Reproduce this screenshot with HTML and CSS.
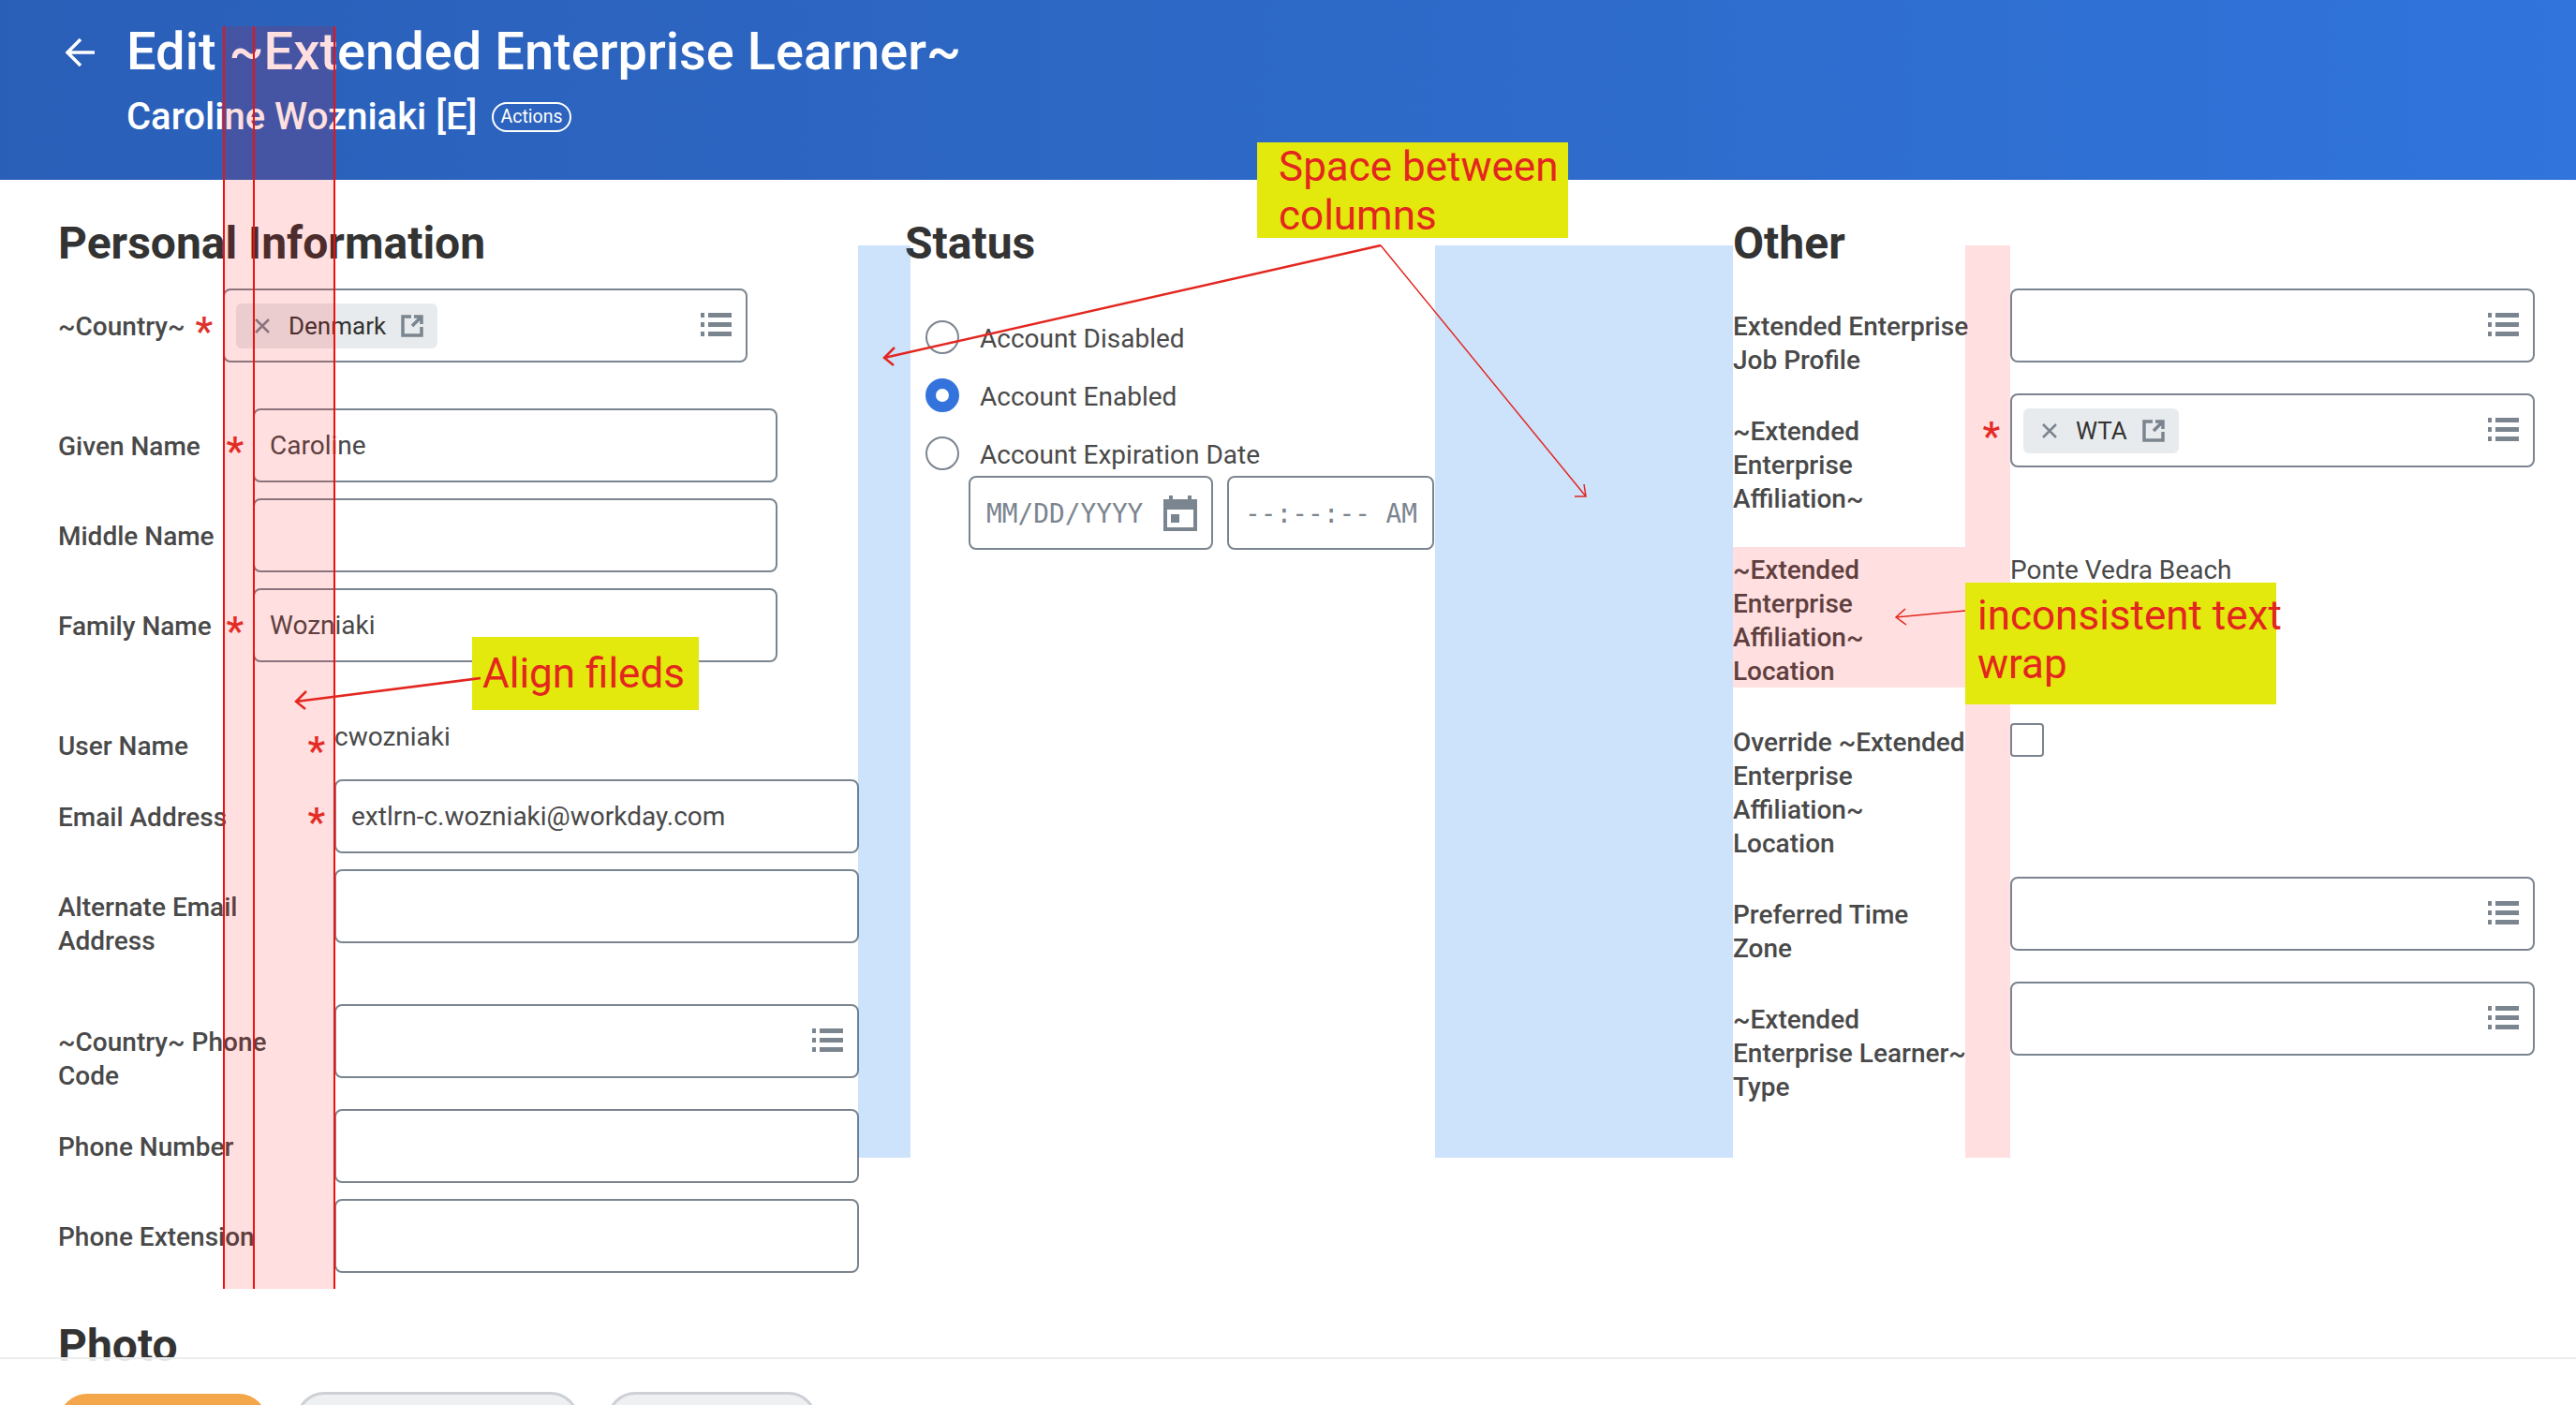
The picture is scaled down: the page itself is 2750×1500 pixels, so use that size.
FILE: index.html
```html
<!DOCTYPE html>
<html lang="en">
<head>
<meta charset="utf-8">
<title>Edit ~Extended Enterprise Learner~</title>
<link rel="stylesheet" href="styles.css">
</head>
<body>
<header class="banner">
  <svg class="back" viewBox="0 0 32 32" width="32" height="32"><path d="M31 16H2M16 2 2 16l14 14"/></svg>
  <div class="banner-text">
    <h1 class="title">Edit ~Extended Enterprise Learner~</h1>
    <div class="subtitle"><span>Caroline Wozniaki [E]</span><span class="pill">Actions</span></div>
  </div>
</header>

<main class="form">
  <section class="col">
    <h2 class="heading">Personal Information</h2>
    <div class="row">
      <div class="label w-country"><span>~Country~</span><span class="req">*</span></div>
      <div class="field prompt">
        <span class="chip">
          <svg class="chip-x" viewBox="0 0 16 16" width="16" height="16"><path d="M1 1l14 14M15 1 1 15"/></svg>
          <span class="chip-text">Denmark</span>
          <svg class="chip-open" viewBox="0 0 24 24" width="24" height="24"><path d="M11 2H2v20h20v-9"/><path d="M12 12 21 3M14 2h8v8"/></svg>
        </span>
        <svg class="list" viewBox="0 0 33 25" width="33" height="25"><path d="M0 0h4v5H0zM8 0h25v5H8zM0 10h4v5H0zM8 10h25v5H8zM0 20h4v5H0zM8 20h25v5H8z"/></svg>
      </div>
    </div>
    <div class="row spaced">
      <div class="label w-name"><span>Given Name</span><span class="req">*</span></div>
      <div class="field">Caroline</div>
    </div>
    <div class="row">
      <div class="label w-name"><span>Middle Name</span></div>
      <div class="field"></div>
    </div>
    <div class="row">
      <div class="label w-name"><span>Family Name</span><span class="req">*</span></div>
      <div class="field">Wozniaki</div>
    </div>
    <div class="row spaced">
      <div class="label w-wide"><span>User Name</span><span class="req">*</span></div>
      <div class="value value-high">cwozniaki</div>
    </div>
    <div class="row">
      <div class="label w-wide"><span>Email Address</span><span class="req">*</span></div>
      <div class="field">extlrn-c.wozniaki@workday.com</div>
    </div>
    <div class="row">
      <div class="label w-wide"><span>Alternate Email<br>Address</span></div>
      <div class="field"></div>
    </div>
    <div class="row spaced">
      <div class="label w-wide"><span>~Country~ Phone<br>Code</span></div>
      <div class="field prompt end">
        <svg class="list" viewBox="0 0 33 25" width="33" height="25"><path d="M0 0h4v5H0zM8 0h25v5H8zM0 10h4v5H0zM8 10h25v5H8zM0 20h4v5H0zM8 20h25v5H8z"/></svg>
      </div>
    </div>
    <div class="row">
      <div class="label w-wide"><span>Phone Number</span></div>
      <div class="field"></div>
    </div>
    <div class="row">
      <div class="label w-wide"><span>Phone Extension</span></div>
      <div class="field"></div>
    </div>
    <h2 class="heading photo">Photo</h2>
  </section>

  <section class="col col-status">
    <h2 class="heading">Status</h2>
    <div class="radios">
      <div class="radio-row"><span class="radio"></span><span class="radio-text">Account Disabled</span></div>
      <div class="radio-row"><span class="radio on"></span><span class="radio-text">Account Enabled</span></div>
      <div class="radio-row"><span class="radio"></span><span class="radio-text">Account Expiration Date</span></div>
    </div>
    <div class="date-row">
      <div class="field mono date">
        <span>MM/DD/YYYY</span>
        <svg class="cal" viewBox="0 0 36 38" width="36" height="38"><path fill-rule="evenodd" d="M6 0h4v4h16V0h4v4h6v34H0V4h6zM4 15v19h28V15zM8 20h9v9H8z"/></svg>
      </div>
      <div class="field mono time">--:--:-- AM</div>
    </div>
  </section>

  <section class="col col-other">
    <h2 class="heading">Other</h2>
    <div class="row">
      <div class="label w-other"><span>Extended Enterprise<br>Job Profile</span></div>
      <div class="field prompt end">
        <svg class="list" viewBox="0 0 33 25" width="33" height="25"><path d="M0 0h4v5H0zM8 0h25v5H8zM0 10h4v5H0zM8 10h25v5H8zM0 20h4v5H0zM8 20h25v5H8z"/></svg>
      </div>
    </div>
    <div class="row">
      <div class="label w-other"><span>~Extended<br>Enterprise<br>Affiliation~</span><span class="req">*</span></div>
      <div class="field prompt">
        <span class="chip">
          <svg class="chip-x" viewBox="0 0 16 16" width="16" height="16"><path d="M1 1l14 14M15 1 1 15"/></svg>
          <span class="chip-text">WTA</span>
          <svg class="chip-open" viewBox="0 0 24 24" width="24" height="24"><path d="M11 2H2v20h20v-9"/><path d="M12 12 21 3M14 2h8v8"/></svg>
        </span>
        <svg class="list" viewBox="0 0 33 25" width="33" height="25"><path d="M0 0h4v5H0zM8 0h25v5H8zM0 10h4v5H0zM8 10h25v5H8zM0 20h4v5H0zM8 20h25v5H8z"/></svg>
      </div>
    </div>
    <div class="row">
      <div class="label w-other"><span>~Extended<br>Enterprise<br>Affiliation~<br>Location</span></div>
      <div class="value">Ponte Vedra Beach</div>
    </div>
    <div class="row">
      <div class="label w-other"><span>Override ~Extended<br>Enterprise<br>Affiliation~<br>Location</span></div>
      <span class="check"></span>
    </div>
    <div class="row">
      <div class="label w-other"><span>Preferred Time<br>Zone</span></div>
      <div class="field prompt end">
        <svg class="list" viewBox="0 0 33 25" width="33" height="25"><path d="M0 0h4v5H0zM8 0h25v5H8zM0 10h4v5H0zM8 10h25v5H8zM0 20h4v5H0zM8 20h25v5H8z"/></svg>
      </div>
    </div>
    <div class="row">
      <div class="label w-other"><span>~Extended<br>Enterprise Learner~<br>Type</span></div>
      <div class="field prompt end">
        <svg class="list" viewBox="0 0 33 25" width="33" height="25"><path d="M0 0h4v5H0zM8 0h25v5H8zM0 10h4v5H0zM8 10h25v5H8zM0 20h4v5H0zM8 20h25v5H8z"/></svg>
      </div>
    </div>
  </section>
</main>

<footer class="actions">
  <span class="btn btn-primary"></span>
  <span class="btn btn-second"></span>
  <span class="btn btn-third"></span>
</footer>

<div class="band band-left"></div>
<div class="rule rule-a"></div>
<div class="rule rule-b"></div>
<div class="rule rule-c"></div>
<div class="gap gap-a"></div>
<div class="gap gap-b"></div>
<div class="band band-right"></div>
<div class="band band-row"></div>

<div class="note note-align">Align fileds</div>
<div class="note note-space">Space between<br>columns</div>
<div class="note note-wrap">inconsistent text<br>wrap</div>

<svg class="arrows" viewBox="0 0 2750 1500" width="2750" height="1500">
  <path class="thick" d="M513 724 316 749M327 738 316 749l10 8"/>
  <path class="thick" d="M1474 262 944 382M955 371l-11 11 10 8"/>
  <path d="M1474 262 1693 530M1681 530h12l-2-13"/>
  <path d="M2098 652 2024 659M2034 650l-10 9 11 8"/>
</svg>
</body>
</html>
```
FILE: styles.css
```css
* { box-sizing: border-box; }
html, body { margin: 0; height: 100%; overflow: hidden; }
body {
  position: relative;
  width: 2750px;
  height: 1500px;
  background: #fff;
  font-family: Roboto, "Liberation Sans", sans-serif;
  font-size: 28px;
  color: #494949;
}

.banner {
  height: 192px;
  padding: 23px 0 0 70px;
  display: flex;
  align-items: flex-start;
  background: linear-gradient(90deg, #2a5fb8 0%, #2e6bca 60%, #3074dc 100%);
  color: #fff;
}
.back { flex: none; margin: 17px 33px 0 0; fill: none; stroke: #fff; stroke-width: 3.5; }
.title { margin: 0; font-size: 56px; line-height: 64px; font-weight: 500; }
.subtitle {
  margin-top: 15px;
  display: flex;
  align-items: center;
  gap: 16px;
  font-size: 40px;
  line-height: 46px;
  font-weight: 500;
}
.pill {
  height: 32px;
  padding: 0 7px;
  border: 2px solid #fff;
  border-radius: 16px;
  font-size: 19.5px;
  font-weight: 400;
  line-height: 28px;
}

.form { display: flex; padding: 39px 0 0 62px; }
.col { flex: none; width: 855px; display: flex; flex-direction: column; gap: 17px; }
.col-status { width: 566px; margin-left: 49px; }
.col-other { margin-left: 318px; }
.heading { margin: 0 0 2px; font-size: 48px; line-height: 58px; font-weight: 700; color: #333; }
.photo { margin: 32px 0 0; }

.row { display: flex; align-items: flex-start; }
.spaced { margin-top: 32px; }
.label {
  flex: none;
  display: flex;
  justify-content: space-between;
  padding: 23px 11px 0 0;
  font-weight: 500;
  line-height: 36px;
  white-space: nowrap;
}
.w-country { width: 176px; }
.w-name { width: 208px; padding-right: 10px; }
.w-wide { width: 295px; padding-right: 10px; }
.w-other { width: 296px; }
.req { height: 36px; color: #e0322c; font-size: 42px; font-weight: 500; line-height: 45px; }

.field {
  flex: none;
  width: 560px;
  height: 79px;
  padding: 0 15px 0 16px;
  display: flex;
  align-items: center;
  border: 2px solid #7b858f;
  border-radius: 8px;
  background: #fff;
}
.prompt { justify-content: space-between; padding-left: 12px; }
.end { justify-content: flex-end; }
.value { padding-top: 23px; line-height: 36px; }
.value-high { padding-top: 13px; }
.list { flex: none; margin-top: -3px; fill: #7b858f; }

.chip {
  height: 48px;
  padding: 0 15px 0 20px;
  display: flex;
  align-items: center;
  background: #e8ebed;
  border-radius: 6px;
  font-size: 26px;
  color: #333;
}
.chip-x { flex: none; fill: none; stroke: #7b858f; stroke-width: 2.5; }
.chip-text { margin: 0 16px 0 20px; }
.chip-open { flex: none; fill: none; stroke: #7b858f; stroke-width: 3.5; }

.radios { margin: 34px 0 0 22px; display: flex; flex-direction: column; gap: 26px; }
.radio-row { display: flex; align-items: flex-start; gap: 22px; height: 36px; }
.radio {
  flex: none;
  width: 36px;
  height: 36px;
  border: 2px solid #7b858f;
  border-radius: 50%;
  background: #fff;
}
.radio.on { border: 11px solid #3473dc; }
.radio-text { margin-top: 2px; line-height: 36px; }
.date-row { margin: -11px 0 0 68px; display: flex; gap: 15px; }
.mono { font-family: "DejaVu Sans Mono", monospace; font-size: 27.8px; color: #7b858f; }
.mono span, .time { line-height: 36px; }
.date { width: 261px; justify-content: space-between; padding: 0 15px 0 17px; }
.date span { margin-top: 3px; }
.time { width: 221px; padding: 3px 0 0 17px; }
.cal { flex: none; fill: #7b858f; }
.check {
  flex: none;
  width: 36px;
  height: 36px;
  margin-top: 20px;
  border: 2px solid #7b858f;
  border-radius: 4px;
}

.actions {
  position: absolute;
  left: 0;
  right: 0;
  top: 1449px;
  height: 51px;
  padding-top: 35px;
  display: flex;
  align-items: flex-start;
  border-top: 2px solid #eceded;
  background: linear-gradient(180deg, rgba(255,255,255,.85) 0, #fff 9px);
  overflow: hidden;
}
.btn { flex: none; height: 60px; border-radius: 30px; }
.btn-primary { width: 222px; margin: 2px 0 0 63px; background: #f4a64a; }
.btn-second { width: 302px; margin-left: 31px; background: #eef0f2; border: 3px solid #cdd1d6; }
.btn-third { width: 224px; margin-left: 30px; background: #eef0f2; border: 3px solid #cdd1d6; }

.band { position: absolute; background: rgba(255, 0, 0, .125); }
.band-left { left: 238px; top: 28px; width: 119px; height: 1348px; }
.band-right { left: 2098px; top: 262px; width: 48px; height: 974px; }
.band-row { left: 1850px; top: 584px; width: 248px; height: 150px; }
.rule { position: absolute; top: 28px; width: 2px; height: 1348px; background: #f01010; }
.rule-a { left: 238px; }
.rule-b { left: 270px; }
.rule-c { left: 356px; }
.gap { position: absolute; top: 262px; height: 974px; background: rgba(5, 110, 235, .2); }
.gap-a { left: 916px; width: 56px; }
.gap-b { left: 1532px; width: 318px; }

.note {
  position: absolute;
  background: #e3e80d;
  color: #e3261f;
  font-family: Roboto, "Liberation Sans", sans-serif;
  font-size: 44px;
  line-height: 52px;
  white-space: nowrap;
}
.note-align { left: 504px; top: 680px; width: 242px; height: 78px; padding: 13px 0 0 11px; }
.note-space { left: 1342px; top: 152px; width: 332px; height: 102px; padding-left: 23px; }
.note-wrap { left: 2098px; top: 622px; width: 332px; height: 130px; padding: 9px 0 0 13px; }
.arrows { position: absolute; left: 0; top: 0; fill: none; stroke: #e3261f; stroke-width: 1.5; pointer-events: none; }
.arrows .thick { stroke-width: 2.5; }
```
